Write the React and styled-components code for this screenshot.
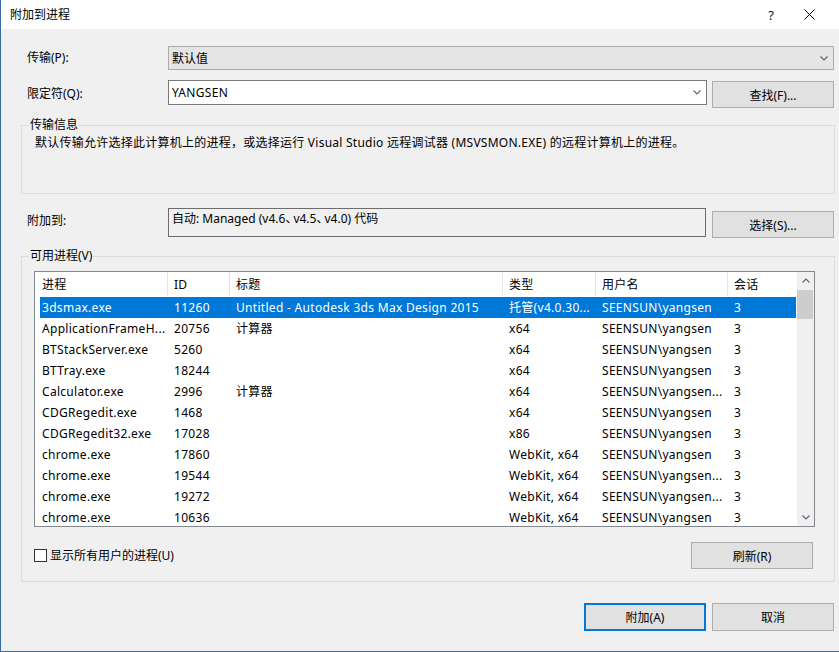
import React from "react";
import styled, { createGlobalStyle } from "styled-components";

const GlobalStyle = createGlobalStyle`
  html, body { margin: 0; padding: 0; background: #f0f0f0; }
  body {
    font-family: "Noto Sans", "Noto Sans CJK SC", sans-serif;
    font-size: 12px;
    color: #000;
  }
  * { box-sizing: border-box; }
`;

const Window = styled.div`
  width: 839px;
  height: 652px;
  background: #f0f0f0;
  border-left: 1px solid #3c6ca3;
  border-bottom: 1px solid #3c6ca3;
  display: flex;
  flex-direction: column;
  overflow: hidden;
`;

const TitleBar = styled.div`
  height: 29px;
  background: #fff;
  display: flex;
  align-items: center;
  padding-left: 9px;
  padding-right: 11px;
`;

const TitleText = styled.div`
  flex: 1;
  font-size: 12px;
  line-height: 16px;
`;

const TitleButton = styled.div`
  width: 38px;
  height: 29px;
  display: flex;
  align-items: center;
  justify-content: center;
  font-size: 13px;
  color: #111;
`;

const Body = styled.div`
  flex: 1;
  display: flex;
  flex-direction: column;
  padding: 17px 4px 0 20px;
`;

const FormRow = styled.div`
  display: flex;
  align-items: flex-start;
  margin-top: ${(p) => p.$mt || 0}px;
`;

const Label = styled.div`
  width: 147px;
  padding-left: 6px;
  height: ${(p) => p.$h}px;
  display: flex;
  align-items: center;
  white-space: nowrap;
`;

const Combo = styled.div`
  width: 666px;
  height: 24px;
  background: #e5e5e5;
  border: 1px solid #acacac;
  display: flex;
  align-items: center;
  justify-content: space-between;
  padding: 0 5px 0 3px;
`;

const TextInput = styled.div`
  width: 539px;
  height: 25px;
  background: #fff;
  border: 1px solid #7a7a7a;
  display: flex;
  align-items: center;
  justify-content: space-between;
  padding: 0 5px 0 3px;
  letter-spacing: 0.3px;
`;

const ReadOnlyBox = styled.div`
  width: 538px;
  height: 29px;
  background: #f0f0f0;
  border: 1px solid #6d6d6d;
  padding: 2px 0 0 3px;
  line-height: 16px;
`;

const NarrowPunct = styled.span`
  letter-spacing: -4px;
`;

const Button = styled.button`
  width: 122px;
  height: ${(p) => p.$h || 27}px;
  margin-left: ${(p) => p.$ml || 0}px;
  margin-top: ${(p) => p.$mt || 0}px;
  margin-right: ${(p) => p.$mr || 0}px;
  background: #e1e1e1;
  border: 1px solid ${(p) => (p.$default ? "#0078d7" : "#adadad")};
  box-shadow: ${(p) => (p.$default ? "inset 0 0 0 1px #0078d7" : "none")};
  font-family: inherit;
  font-size: 12px;
  color: #000;
  padding: 0;
  display: flex;
  align-items: center;
  justify-content: center;
`;

const Group = styled.fieldset`
  margin: ${(p) => p.$mt || 0}px 0 0 0;
  min-width: 0;
  border: 1px solid #dcdcdc;
  padding: ${(p) => p.$pad};
`;

const Legend = styled.legend`
  padding: 0 1px;
  line-height: 16px;
  font-size: 12px;
`;

const Description = styled.div`
  height: 60px;
  padding: 2px 0 0 6px;
  line-height: 16px;
  letter-spacing: 0.25px;
`;

const GroupInner = styled.div`
  padding-left: 5px;
  display: flex;
  flex-direction: column;
`;

const ListBox = styled.div`
  width: 781px;
  height: 256px;
  background: #fff;
  border: 1px solid #828790;
  display: flex;
  overflow: hidden;
`;

const ListContent = styled.div`
  flex: 1;
  overflow: hidden;
  display: flex;
  flex-direction: column;
  letter-spacing: 0.3px;
`;

const HeaderRow = styled.div`
  display: flex;
  height: 24px;
  flex-shrink: 0;
  margin-bottom: 1px;
`;

const HeaderCell = styled.div`
  width: ${(p) => p.$w}px;
  flex-shrink: 0;
  padding-left: ${(p) => p.$pl}px;
  border-right: ${(p) => (p.$last ? "none" : "1px solid #e5e5e5")};
  display: flex;
  align-items: center;
  white-space: nowrap;
`;

const Row = styled.div`
  display: flex;
  height: 21px;
  flex-shrink: 0;
  margin-left: 5px;
  width: 756px;
  align-items: center;
  background: ${(p) => (p.$selected ? "#0078d7" : "transparent")};
  color: ${(p) => (p.$selected ? "#fff" : "#000")};
`;

const Cell = styled.div`
  width: ${(p) => p.$w}px;
  flex-shrink: 0;
  padding-left: ${(p) => p.$pl}px;
  white-space: nowrap;
  overflow: hidden;
  line-height: 21px;
`;

const ScrollBar = styled.div`
  width: 17px;
  flex-shrink: 0;
  background: #f0f0f0;
  display: flex;
  flex-direction: column;
`;

const ScrollArrow = styled.div`
  height: 17px;
  display: flex;
  align-items: center;
  justify-content: center;
`;

const ScrollThumb = styled.div`
  height: 29px;
  margin: 1px 1px 0 0;
  background: #cdcdcd;
`;

const ScrollTrack = styled.div`
  flex: 1;
`;

const BottomRow = styled.div`
  display: flex;
  justify-content: space-between;
  align-items: center;
  margin-top: 15px;
  width: 781px;
`;

const CheckLabel = styled.label`
  display: flex;
  align-items: center;
  gap: 3px;
  margin-top: -1px;
`;

const CheckBox = styled.span`
  width: 13px;
  height: 13px;
  background: #fff;
  border: 1px solid #333;
  display: inline-block;
`;

const Footer = styled.div`
  display: flex;
  justify-content: flex-end;
  gap: 6px;
  margin-top: 21px;
  padding-right: 1px;
`;

const Chevron = ({ up }) => (
  <svg width="8" height="5" viewBox="0 0 8 5">
    <polyline
      points={up ? "0.5,4.5 4,1 7.5,4.5" : "0.5,0.5 4,4 7.5,0.5"}
      fill="none"
      stroke="#606060"
      strokeWidth="1.1"
    />
  </svg>
);

const CloseIcon = () => (
  <svg width="11" height="11" viewBox="0 0 11 11">
    <path d="M0.5 0.5 L10.5 10.5 M10.5 0.5 L0.5 10.5" stroke="#000" strokeWidth="1" fill="none" />
  </svg>
);

const headerCols = [
  { t: "进程", w: 133, pl: 7 },
  { t: "ID", w: 62, pl: 6 },
  { t: "标题", w: 273, pl: 6 },
  { t: "类型", w: 93, pl: 6 },
  { t: "用户名", w: 132, pl: 6 },
  { t: "会话", w: 68, pl: 6 },
];

const rowCols = [
  { w: 128, pl: 2 },
  { w: 62, pl: 6 },
  { w: 273, pl: 6 },
  { w: 93, pl: 6 },
  { w: 132, pl: 6 },
  { w: 68, pl: 6 },
];

const rows = [
  ["3dsmax.exe", "11260", "Untitled - Autodesk 3ds Max Design 2015", "托管(v4.0.30...", "SEENSUN\\yangsen", "3"],
  ["ApplicationFrameH...", "20756", "计算器", "x64", "SEENSUN\\yangsen", "3"],
  ["BTStackServer.exe", "5260", "", "x64", "SEENSUN\\yangsen", "3"],
  ["BTTray.exe", "18244", "", "x64", "SEENSUN\\yangsen", "3"],
  ["Calculator.exe", "2996", "计算器", "x64", "SEENSUN\\yangsen...", "3"],
  ["CDGRegedit.exe", "1468", "", "x64", "SEENSUN\\yangsen", "3"],
  ["CDGRegedit32.exe", "17028", "", "x86", "SEENSUN\\yangsen", "3"],
  ["chrome.exe", "17860", "", "WebKit, x64", "SEENSUN\\yangsen", "3"],
  ["chrome.exe", "19544", "", "WebKit, x64", "SEENSUN\\yangsen...", "3"],
  ["chrome.exe", "19272", "", "WebKit, x64", "SEENSUN\\yangsen...", "3"],
  ["chrome.exe", "10636", "", "WebKit, x64", "SEENSUN\\yangsen", "3"],
];

export default function App() {
  return (
    <>
      <GlobalStyle />
      <Window>
        <TitleBar>
          <TitleText>附加到进程</TitleText>
          <TitleButton>?</TitleButton>
          <TitleButton>
            <CloseIcon />
          </TitleButton>
        </TitleBar>
        <Body>
          <FormRow>
            <Label $h={21}>传输(P):</Label>
            <Combo>
              <span>默认值</span>
              <Chevron />
            </Combo>
          </FormRow>
          <FormRow $mt={10}>
            <Label $h={25}>限定符(Q):</Label>
            <TextInput>
              <span>YANGSEN</span>
              <Chevron />
            </TextInput>
            <Button $ml={5} $mt={1}>查找(F)...</Button>
          </FormRow>
          <Group $mt={9} $pad="0 7px 0 7px">
            <Legend>传输信息</Legend>
            <Description>
              默认传输允许选择此计算机上的进程，或选择运行 Visual Studio 远程调试器 (MSVSMON.EXE) 的远程计算机上的进程。
            </Description>
          </Group>
          <FormRow $mt={14}>
            <Label $h={24}>附加到:</Label>
            <ReadOnlyBox>
              自动: Managed (v4.6<NarrowPunct>、</NarrowPunct>v4.5<NarrowPunct>、</NarrowPunct>v4.0) 代码
            </ReadOnlyBox>
            <Button $ml={6} $mt={3}>选择(S)...</Button>
          </FormRow>
          <Group $mt={10} $pad="7px 0 12px 7px">
            <Legend>可用进程(V)</Legend>
            <GroupInner>
              <ListBox>
                <ListContent>
                  <HeaderRow>
                    {headerCols.map((c, i) => (
                      <HeaderCell key={c.t} $w={c.w} $pl={c.pl} $last={i === headerCols.length - 1}>
                        {c.t}
                      </HeaderCell>
                    ))}
                  </HeaderRow>
                  {rows.map((r, i) => (
                    <Row key={i} $selected={i === 0}>
                      {r.map((v, j) => (
                        <Cell key={j} $w={rowCols[j].w} $pl={rowCols[j].pl}>
                          {v}
                        </Cell>
                      ))}
                    </Row>
                  ))}
                </ListContent>
                <ScrollBar>
                  <ScrollArrow>
                    <Chevron up />
                  </ScrollArrow>
                  <ScrollThumb />
                  <ScrollTrack />
                  <ScrollArrow>
                    <Chevron />
                  </ScrollArrow>
                </ScrollBar>
              </ListBox>
              <BottomRow>
                <CheckLabel>
                  <CheckBox />
                  <span>显示所有用户的进程(U)</span>
                </CheckLabel>
                <Button $mr={2}>刷新(R)</Button>
              </BottomRow>
            </GroupInner>
          </Group>
          <Footer>
            <Button $default $h={28}>附加(A)</Button>
            <Button $h={28}>取消</Button>
          </Footer>
        </Body>
      </Window>
    </>
  );
}
